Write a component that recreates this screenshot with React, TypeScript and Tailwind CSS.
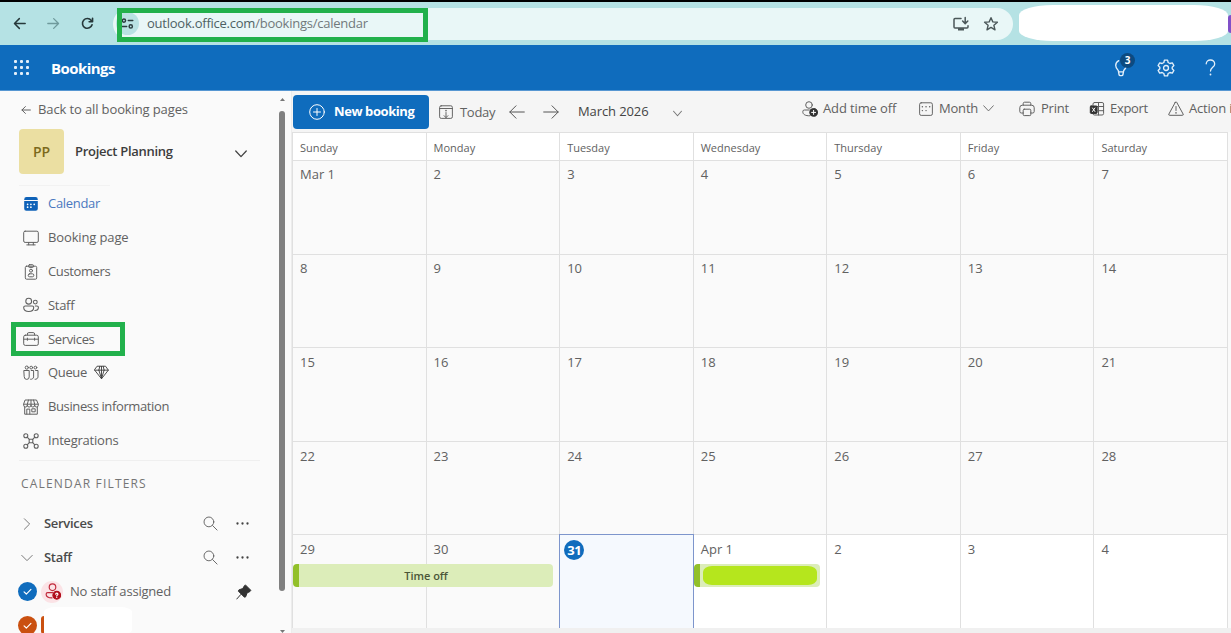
import type { ReactNode } from 'react'

type IconProps = { children: ReactNode; className?: string; box?: string; sw?: number }

const Icon = ({ children, className = 'size-4', box = '0 0 16 16', sw = 1 }: IconProps) => (
    <svg className={`shrink-0 ${className}`} viewBox={box} fill="none" stroke="currentColor" strokeWidth={sw} strokeLinecap="round" strokeLinejoin="round">
        {children}
    </svg>
)

const Search = () => (
    <Icon className="size-[15px] text-[#616161]">
        <circle cx="6.3" cy="6.3" r="5.2" />
        <path d="M10.2 10.2 15 15" />
    </Icon>
)

const Dots = () => (
    <Icon className="w-[13px] h-[5px] text-[#424242]" box="0 0 13 5">
        <g fill="currentColor" stroke="none">
            <circle cx="1.5" cy="2.5" r="1.15" />
            <circle cx="6.5" cy="2.5" r="1.15" />
            <circle cx="11.5" cy="2.5" r="1.15" />
        </g>
    </Icon>
)

const nav = [
    {
        label: 'Calendar',
        track: 'tracking-[-0.3px]',
        icon: (
            <Icon className="size-4 text-[#0f62b8]">
                <path fill="currentColor" stroke="none" d="M1.2 4V3.4A2.3 2.3 0 0 1 3.5 1.1h9a2.3 2.3 0 0 1 2.3 2.3V4zM1.2 5.1h13.6v7.6a2.1 2.1 0 0 1-2.1 2.1H3.3a2.1 2.1 0 0 1-2.1-2.1z" />
                <path stroke="#fff" strokeWidth="1.7" d="M7.9 8.3h.02M11.2 8.3h.02M4.6 11.2h.02M7.9 11.2h.02M4.6 8.3h.02" />
            </Icon>
        ),
    },
    {
        label: 'Booking page',
        track: 'tracking-[-0.13px]',
        icon: (
            <Icon className="size-4">
                <rect x=".7" y="1.2" width="14.6" height="11.2" rx="1.4" />
                <path d="M5.7 12.5v2.3M10.3 12.5v2.3M3.8 14.9h8.4" />
            </Icon>
        ),
    },
    {
        label: 'Customers',
        track: 'tracking-[-0.38px]',
        icon: (
            <Icon className="size-4">
                <rect x="2.3" y="2.2" width="11.4" height="13" rx="1.3" />
                <rect x="5.6" y=".7" width="4.8" height="2.7" rx=".8" />
                <circle cx="8" cy="6.7" r="1.5" />
                <rect x="5.2" y="9.8" width="5.6" height="3" rx="1.4" />
            </Icon>
        ),
    },
    {
        label: 'Staff',
        track: 'tracking-[-0.3px]',
        icon: (
            <Icon className="size-4" sw={1.1}>
                <circle cx="5.7" cy="4.2" r="2.9" />
                <circle cx="12.3" cy="5.1" r="1.9" />
                <path d="M2.2 9h7a1.5 1.5 0 0 1 1.5 1.5c0 2.6-2 4-5 4s-5-1.4-5-4A1.5 1.5 0 0 1 2.2 9zM12.3 9h1.6a1.5 1.5 0 0 1 1.5 1.5c0 1.9-1.3 3-3.5 3" />
            </Icon>
        ),
    },
    {
        label: 'Services',
        track: 'tracking-[-0.35px]',
        icon: (
            <Icon className="size-4">
                <rect x=".7" y="4.2" width="14.6" height="10.2" rx="1.6" />
                <path d="M4.4 4V3a1.4 1.4 0 0 1 1.4-1.4h4.4A1.4 1.4 0 0 1 11.6 3v1M.8 8.2h14.4M4.4 7.1v2.2M11.6 7.1v2.2" />
            </Icon>
        ),
    },
    {
        label: 'Queue',
        track: 'tracking-[-0.35px]',
        icon: (
            <Icon className="size-4">
                <circle cx="3.8" cy="2.6" r="1.6" />
                <circle cx="8.2" cy="2.6" r="1.4" />
                <circle cx="12.4" cy="2.6" r="1.4" />
                <path d="M1.2 5.5h5v6.4a2.5 2.5 0 0 1-5 0zM8.2 5.5h2.4v6.4a2.5 2.5 0 0 1-3 2.4M12.6 5.5H15v6.4a2.5 2.5 0 0 1-3 2.4" />
            </Icon>
        ),
    },
    {
        label: 'Business information',
        track: 'tracking-[-0.38px]',
        icon: (
            <Icon className="size-4">
                <path d="M2.5 1h11l1.8 4.2v1a1.8 1.8 0 0 1-3.6 0 1.8 1.8 0 0 1-3.7 0 1.8 1.8 0 0 1-3.7 0 1.8 1.8 0 0 1-3.6 0v-1zM.8 5.2h14.4M5.5 1 4.3 5.2v1M8 1v5.2M10.5 1l1.2 4.2v1M1.7 8v7.2h12.6V8M3.8 15v-4.9h3V15" />
                <rect x="9.2" y="9.8" width="3" height="3" />
            </Icon>
        ),
    },
    {
        label: 'Integrations',
        track: 'tracking-[-0.22px]',
        icon: (
            <Icon className="size-4" sw={1.1}>
                <circle cx="2.8" cy="2.8" r="2" />
                <circle cx="13.2" cy="2.8" r="2" />
                <circle cx="2.8" cy="13.2" r="2" />
                <circle cx="13.2" cy="13.2" r="2" />
                <rect x="6.2" y="6.2" width="3.6" height="3.6" rx=".6" />
                <path d="m4.2 4.2 2.1 2.1m3.4 3.4 2.1 2.1m0-7.6L9.7 6.3M6.3 9.7l-2.1 2.1" />
            </Icon>
        ),
    },
]

const days = ['Sunday', 'Monday', 'Tuesday', 'Wednesday', 'Thursday', 'Friday', 'Saturday']

const weeks = [
    ['Mar 1', '2', '3', '4', '5', '6', '7'],
    ['8', '9', '10', '11', '12', '13', '14'],
    ['15', '16', '17', '18', '19', '20', '21'],
    ['22', '23', '24', '25', '26', '27', '28'],
    ['29', '30', '31', 'Apr 1', '2', '3', '4'],
]

const BrowserBar = () => (
    <div className="relative flex h-[45px] shrink-0 items-center border-t-2 border-black bg-[#b5e2e4] pl-[13px]">
        <Icon className="size-[13px] text-[#26383a]" sw={1.8}>
            <path d="M15 8H2M7.8 2 1.8 8l6 6" />
        </Icon>
        <Icon className="ml-[21px] size-[13px] text-[#6f9a9c]" sw={1.6}>
            <path d="M1 8h13M8.2 2l6 6-6 6" />
        </Icon>
        <Icon className="ml-[21px] size-[13px] text-[#26383a]" sw={2}>
            <path d="M13.6 9.5A6 6 0 1 1 12.6 4.2L14 5.6M14.2 1.6v4.2H10" />
        </Icon>
        <div className="ml-[19px] flex h-8 w-[900px] shrink-0 items-center rounded-full bg-[#e9f7f7] pl-[3px]">
            <div className="flex size-[23px] items-center justify-center rounded-full bg-[#b9e2e3]">
                <Icon className="size-[13px] text-[#2b3c3e]" sw={1.8}>
                    <circle cx="3.6" cy="4.4" r="2" />
                    <path d="M9 4.4h5.5M1.5 11.6H7" />
                    <circle cx="12" cy="11.6" r="2" />
                </Icon>
            </div>
            <span className="ml-2 text-[13px] leading-none tracking-[-0.24px] text-[#4e6163]">
                outlook.office.com<span className="text-[#71797b]">/bookings/calendar</span>
            </span>
            <Icon className="ml-auto size-4 text-[#4b5759]" sw={1.5}>
                <path d="M8 2.5H2a1 1 0 0 0-1 1v7.6a1 1 0 0 0 1 1h12a1 1 0 0 0 1-1V9.8M12.2 1.5v5.8M9.6 5l2.6 2.6L14.8 5" />
                <path strokeWidth="2.4" strokeLinecap="butt" d="M5 13.3h6" />
            </Icon>
            <Icon className="ml-[14px] mr-[14px] size-4 text-[#4b5759]" sw={1.4}>
                <path d="m8 1.7 1.8 4.2 4.6.4-3.5 3 1.1 4.5-4-2.4-4 2.4 1.1-4.5-3.5-3 4.6-.4z" />
            </Icon>
        </div>
        <div className="-mt-[2px] ml-[6px] h-9 w-[209px] shrink-0 rounded-[34px/10px] bg-white" />
        <div className="h-[18px] w-[3px] shrink-0 rounded-l-full bg-[#8050c8]" />
        <div className="absolute left-[117px] top-[6px] h-[34px] w-[311px] border-[5px] border-[#22b14c]" />
    </div>
)

const AppHeader = () => (
    <header className="flex h-[46px] shrink-0 items-center border-b border-[#5797d2] bg-[#0f6cbd] pl-[14px] text-white">
        <div className="grid grid-cols-3 gap-[3px]">
            {Array.from({ length: 9 }).map((_, i) => (
                <span key={i} className="size-[3px] rounded-[1px] bg-[#e3effa]" />
            ))}
        </div>
        <h1 className="ml-[22px] pt-px text-[15px] font-bold tracking-[-0.55px]">Bookings</h1>
        <div className="relative ml-auto mr-6 flex">
            <Icon className="size-[18px] text-[#e3effa]" sw={1.2}>
                <path d="M6 1.5a4.7 4.7 0 0 0-2.7 4.3c0 2 1.3 3.3 2.3 4.5l.7 3.7a1 1 0 0 0 1 .8h1.4a1 1 0 0 0 1-.8l.7-3.7c.9-1.1 1.9-2.1 2.2-3.5M5.8 11.4h4.4" />
            </Icon>
            <span className="absolute -top-[6px] left-2 flex size-[15px] items-center justify-center rounded-full bg-[#0c4a80] text-[10px] font-bold">3</span>
        </div>
        <Icon className="ml-[3px] mr-[30px] size-[18px] text-[#e3effa]" sw={1.2}>
            <path d="M6.6 1h2.8l.5 2.1 1.6.9 2.1-.6L15 5.8l-1.5 1.5v1.4l1.5 1.5-1.4 2.4-2.1-.6-1.6.9-.5 2.1H6.6l-.5-2.1-1.6-.9-2.1.6L1 10.2l1.5-1.5V7.3L1 5.8l1.4-2.4 2.1.6 1.6-.9z" />
            <circle cx="8" cy="8" r="2.2" />
        </Icon>
        <Icon className="mr-[15px] h-[17px] w-[11px] text-[#e3effa]" box="0 0 11 17" sw={1.3}>
            <path d="M1.2 4.8A4.1 4.1 0 0 1 5.5 1a4 4 0 0 1 4.2 3.9c0 3.3-4.2 3.6-4.2 7.2" />
            <path strokeWidth="1.8" d="M5.5 15.4v.1" />
        </Icon>
    </header>
)

const FilterHead = ({ label, open }: { label: string; open?: boolean }) => (
    <div className="flex h-[34px] shrink-0 items-center pl-5">
        <Icon className="size-[14px] text-[#757575]" sw={1.1}>
            {open ? <path d="m2 5 6 6 6-6" /> : <path d="m5 2 6 6-6 6" />}
        </Icon>
        <span className="ml-[10px] grow text-[13px] font-semibold tracking-[-0.3px] text-[#4a4a4a]">{label}</span>
        <Search />
        <div className="ml-[18px] mr-[29px] flex">
            <Dots />
        </div>
    </div>
)

const Check = ({ color }: { color: string }) => (
    <div className={`flex size-[19px] shrink-0 items-center justify-center rounded-full ${color}`}>
        <Icon className="size-[11px] text-white" sw={1.7}>
            <path d="m3 8.5 3.3 3.2L13 4.8" />
        </Icon>
    </div>
)

const Sidebar = () => (
    <aside className="flex w-[278px] shrink-0 flex-col overflow-hidden">
        <div className="flex h-9 shrink-0 items-center pl-[21px] pt-[2px] text-[#616161]">
            <Icon className="size-[10px]" sw={1.6}>
                <path d="M15 8H1.5M7 2.5 1.5 8 7 13.5" />
            </Icon>
            <span className="ml-[7px] text-[13px] tracking-[-0.12px]">Back to all booking pages</span>
        </div>
        <div className="mt-px flex h-[46px] shrink-0 items-center pl-[19px]">
            <div className="flex size-[45px] items-center justify-center rounded-[4px] bg-[#ebdfa2] text-[14px] font-semibold text-[#7b6a1c]">PP</div>
            <span className="ml-[11px] w-[160px] pt-[2px] text-[13px] font-semibold tracking-[-0.3px] text-[#3d3d3d]">Project Planning</span>
            <Icon className="mt-[5px] size-3" sw={1.7}>
                <path stroke="#424242" d="m1 4 7 7.5L15 4" />
            </Icon>
        </div>
        <div className="ml-[19px] mt-[11px] h-px w-[91px] shrink-0 bg-[#f2f2f2]" />
        <nav className="shrink-0 pt-px">
            {nav.map((item) => (
                <div key={item.label} className={`relative flex h-[33.85px] items-center pl-[23px] text-[13px] ${item.label === 'Calendar' ? 'text-[#4a78c0]' : 'text-[#616161]'}`}>
                    {item.icon}
                    <span className={`ml-[9px] ${item.track}`}>{item.label}</span>
                    {item.label === 'Queue' && (
                        <Icon className="-mt-[2px] ml-[7px] size-[15px] text-[#424242]">
                            <path d="M3.7 1.3h8.6l3 4.2L8 14.7.7 5.5zM.8 5.5h14.4M5.2 5.5 8 14.5l2.8-9M5.2 5.5l1-4.1M10.8 5.5l-1-4.1M8 1.5v13" />
                        </Icon>
                    )}
                    {item.label === 'Services' && <div className="absolute left-[11px] top-0 h-[34px] w-[114px] border-[5px] border-[#22b14c]" />}
                </div>
            ))}
        </nav>
        <div className="ml-[19px] mt-[2px] h-px w-[241px] shrink-0 bg-[#efefef]" />
        <div className="flex h-[46px] shrink-0 items-center pl-[21px] text-[12px] tracking-[1.18px] text-[#757575]">CALENDAR FILTERS</div>
        <FilterHead label="Services" />
        <FilterHead label="Staff" open />
        <div className="flex h-[33.5px] shrink-0 items-center pl-[18px]">
            <Check color="bg-[#0f6cbd]" />
            <div className="ml-[4px] flex size-[22px] items-center justify-center rounded-full bg-[#fbe3e6] text-[#c0283a]">
                <Icon className="size-[17px]" sw={1.1}>
                    <circle cx="8" cy="4" r="3.1" />
                    <path d="M7.5 14C4 14 2 12.8 2 10.5A1.5 1.5 0 0 1 3.5 9H8" />
                    <circle cx="12" cy="11.5" r="3.6" fill="#b10e1c" stroke="#b10e1c" />
                    <path stroke="#fff" d="M11 10.5c0-1.4 2.1-1.4 2.1 0 0 .8-1.1.9-1.1 1.7m0 1.3v.05" />
                </Icon>
            </div>
            <span className="ml-[7px] grow text-[13px] tracking-[-0.2px] text-[#616161]">No staff assigned</span>
            <Icon className="mr-[26px] size-4 text-[#333]">
                <path fill="currentColor" d="m9.7 1.2 5.1 5.1-.8 1.2-2.9 1.4-1.5 4-1.2.3-6-6 .5-1.3 3.9-1.4 1.6-2.7z" />
                <path d="m4.8 10.5-4 4.5" />
            </Icon>
        </div>
        <div className="flex h-[33.5px] shrink-0 items-center pl-[18px]">
            <Check color="bg-[#ca5010]" />
            <div className="ml-1 h-[18px] w-[3px] rounded-l-full bg-[#ca5010]" />
            <div className="-mt-2 h-7 w-[88px] rounded-[12px/5px] bg-white" />
        </div>
    </aside>
)

const ScrollBar = () => (
    <div className="flex w-[14px] shrink-0 flex-col items-start border-r border-[#ececec] pl-px pt-[7px]">
        <svg className="ml-px h-[3px] w-[5px]" viewBox="0 0 5 3">
            <path fill="#777" d="M2.5 0 5 3H0z" />
        </svg>
        <div className="mt-[10px] h-[480px] w-[6px] rounded-full bg-[#808080]" />
        <svg className="ml-px mt-auto h-[3px] w-[5px]" viewBox="0 0 5 3">
            <path fill="#777" d="M2.5 3 5 0H0z" />
        </svg>
    </div>
)

const Toolbar = () => (
    <div className="flex h-[41px] shrink-0 items-center whitespace-nowrap bg-[#f5f5f5] text-[13px] text-[#616161]">
        <button className="ml-px flex h-[34px] w-[136px] shrink-0 items-center rounded-[4px] bg-[#0f6cbd] pl-4 text-white">
            <Icon className="size-4">
                <circle cx="8" cy="8" r="7.3" />
                <path d="M8 4.5v7M4.5 8h7" />
            </Icon>
            <span className="ml-[9px] text-[13px] font-bold tracking-[-0.42px]">New booking</span>
        </button>
        <Icon className="ml-[10px] size-[14px]" sw={1.1}>
            <rect x=".7" y=".9" width="14.6" height="14.4" rx="1.8" />
            <path d="M.8 4h14.4M8 8.6v5.8M5.8 12.2 8 14.4l2.2-2.2" />
            <path strokeWidth="1.8" d="M8 6.4v.1" />
        </Icon>
        <span className="ml-[7px] w-[35px] shrink-0 pt-[2px] tracking-[-0.3px]">Today</span>
        <Icon className="ml-[14px] size-4 text-[#555]">
            <path d="M15.3 8H.8M7 1.8.8 8 7 14.2" />
        </Icon>
        <Icon className="ml-[18px] size-4 text-[#555]">
            <path d="M.7 8h14.5M9 1.8 15.2 8 9 14.2" />
        </Icon>
        <span className="ml-[19px] w-[72px] shrink-0 font-medium tracking-[-0.1px] text-[#444]">March 2026</span>
        <Icon className="ml-[23px] mt-1 size-[9px] text-[#777]" sw={1.8}>
            <path d="m1 4 7 8 7-8" />
        </Icon>
        <div className="-mt-[6px] ml-[120px] flex shrink-0 items-center">
            <Icon className="size-4">
                <circle cx="7" cy="4" r="3.3" />
                <path d="M7.6 14.8C3.4 14.9.8 13.5.8 10.7A1.6 1.6 0 0 1 2.4 9h5" />
                <circle cx="11.6" cy="11.4" r="3.9" fill="#333" stroke="#333" />
                <path stroke="#fff" d="M11.6 9.4v4M9.6 11.4h4" />
            </Icon>
            <span className="ml-[5px] w-[73px] tracking-[-0.12px]">Add time off</span>
            <Icon className="ml-[23px] size-[14px]" sw={1.1}>
                <rect x=".7" y=".9" width="14.6" height="14.4" rx="1.8" />
                <path strokeWidth="1.6" d="M3.8 9.8h.1M8 9.8h.1M8 5.5h.1M3.8 5.5h.1M12.2 5.5h.1" />
            </Icon>
            <span className="ml-[6px] w-[39px] tracking-[-0.2px]">Month</span>
            <Icon className="ml-[5px] size-[11px]" sw={1.3}>
                <path d="m1 4 7 7.5L15 4" />
            </Icon>
            <Icon className="ml-[25px] size-4">
                <path d="M4.2 4.2V2.6a1.4 1.4 0 0 1 1.4-1.4h4.8a1.4 1.4 0 0 1 1.4 1.4v1.6M4.2 12H2.3a1.5 1.5 0 0 1-1.5-1.5V6.7a2.5 2.5 0 0 1 2.5-2.5h9.4a2.5 2.5 0 0 1 2.5 2.5v3.8a1.5 1.5 0 0 1-1.5 1.5h-1.9" />
                <rect x="4.2" y="8.2" width="7.6" height="6.4" rx="1" />
            </Icon>
            <span className="ml-[6px] w-[28px] tracking-[-0.2px]">Print</span>
            <Icon className="ml-[20px] size-4">
                <rect x="4" y="1.5" width="10.6" height="12.5" rx="1.5" />
                <path d="M9.5 1.5V14M4 5.5h10.6M9 9.7h5.6" />
                <rect x="1.3" y="5" width="6.8" height="7.4" rx=".8" fill="#333" stroke="#333" />
                <path stroke="#fff" d="m3.5 7 2.4 3.5m0-3.5-2.4 3.5" />
            </Icon>
            <span className="ml-[5px] w-[38px] tracking-[-0.3px]">Export</span>
            <Icon className="ml-[20px] size-4">
                <path d="M7.3 1.3.9 13a.9.9 0 0 0 .8 1.3h12.6a.9.9 0 0 0 .8-1.3L8.7 1.3a.8.8 0 0 0-1.4 0zM8 5.5v4" />
                <path strokeWidth="1.5" d="M8 11.8v.1" />
            </Icon>
            <span className="ml-[5px] tracking-[-0.2px]">Action items</span>
        </div>
    </div>
)

const Calendar = () => (
    <div className="grid h-[496px] w-[936px] shrink-0 grid-cols-7 grid-rows-[28px_94px_93px_94px_93px_93px] border-r border-t border-[#e0e0e0] bg-white">
        {days.map((day) => (
            <div key={day} className="flex items-center border-b border-l border-[#e0e0e0] pl-[7px] pt-[3px] text-[11px] text-[#616161]">{day}</div>
        ))}
        {weeks.map((week, w) =>
            week.map((date, d) => {
                const today = date === '31'
                const future = w === 4 && d > 2
                return (
                    <div
                        key={`${w}-${d}`}
                        className={`relative text-[13px] leading-[16px] ${today ? 'z-10 -mr-px -mt-px border-x border-t border-[#7d95cc] bg-[#f5f9fe] pl-1 pt-[5px]' : 'border-l border-[#e0e0e0] pl-[7px] text-[#616161]'} ${!today && w < 4 ? 'border-b' : ''} ${!today && w < 2 ? 'pt-[5px]' : ''} ${!today && w > 1 ? 'pt-[6px]' : ''} ${!today && !future ? 'bg-[#fafafa]' : ''}`}
                    >
                        {today ? (
                            <span className="flex size-[20px] items-center justify-center rounded-full bg-[#0f6cbd] text-[13px] font-bold tracking-[-0.5px] text-white">31</span>
                        ) : (
                            date
                        )}
                        {date === '29' && (
                            <div className="absolute left-0 top-[29px] z-10 flex h-[23px] w-[260px] items-center justify-center rounded-[4px] border-l-[6px] border-[#92c02a] bg-[#dcedb9] text-[11px] font-semibold text-[#4b5638]">
                                Time off
                            </div>
                        )}
                        {date === 'Apr 1' && (
                            <div className="absolute left-0 top-[29px] z-20 h-[23px] w-[126px] rounded-[4px] border-l-[6px] border-[#92c02a] bg-[#dcedb9] py-[2px] pl-[3px] pr-[3px]">
                                <div className="h-[19px] rounded-[9px/6px] bg-[#b5e61d]" />
                            </div>
                        )}
                    </div>
                )
            }),
        )}
    </div>
)

const App = () => {
    return (
        <div className="flex h-[633px] w-[1231px] flex-col overflow-hidden bg-[#fafafa] font-['Open_Sans','Noto_Sans',sans-serif]">
            <BrowserBar />
            <AppHeader />
            <div className="flex min-h-0 grow">
                <Sidebar />
                <ScrollBar />
                <main className="flex min-w-0 grow flex-col overflow-hidden bg-[#f0f0f0]">
                    <Toolbar />
                    <div className="shrink-0 bg-[#fafafa]">
                        <Calendar />
                    </div>
                </main>
            </div>
        </div>
    )
}

export default App
